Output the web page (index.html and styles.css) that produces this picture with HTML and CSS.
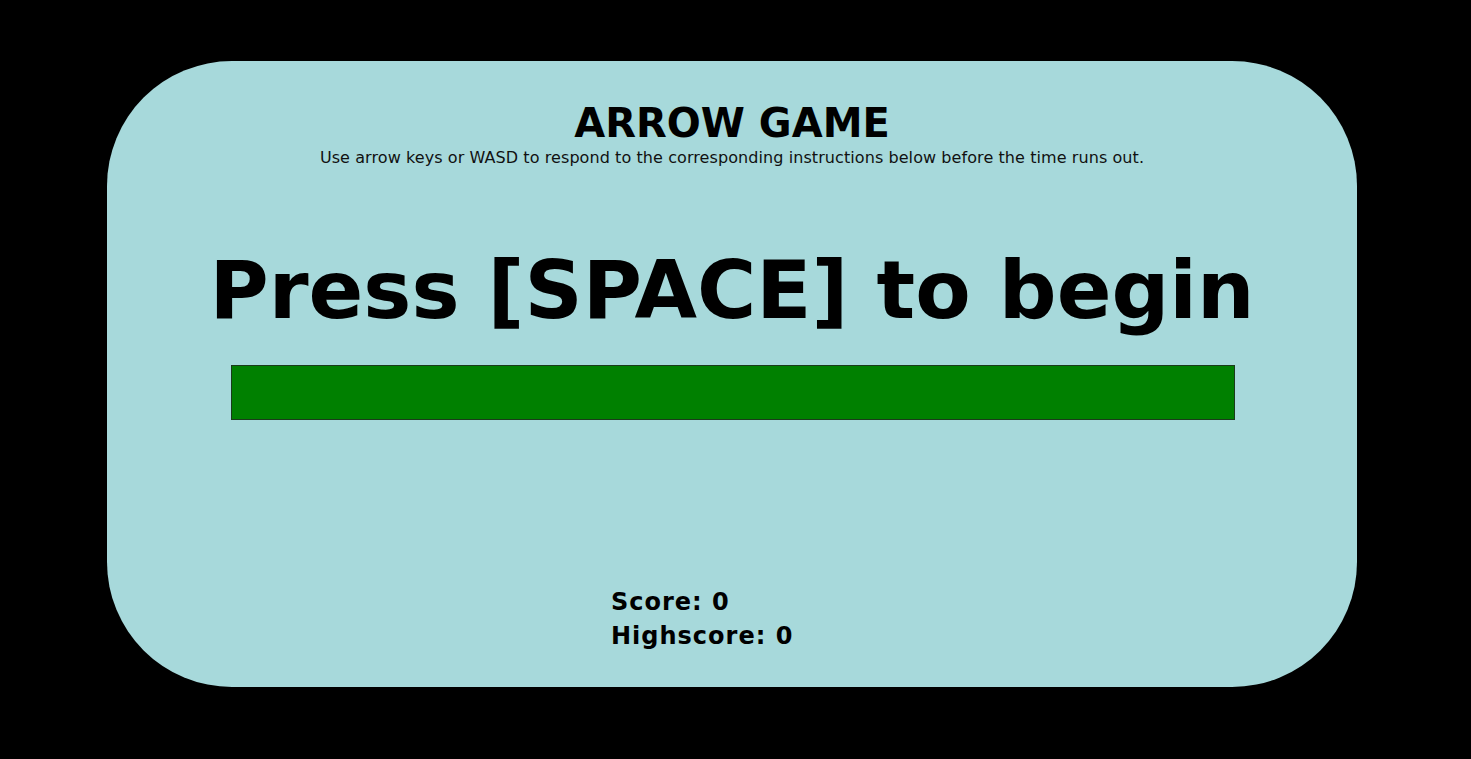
FILE: index.html
```html
<!DOCTYPE html>
<html>
<head>
<meta charset="utf-8">
<title>Arrow Game</title>
<link rel="stylesheet" href="styles.css">
</head>
<body>
  <main class="card">
    <h1 class="title">ARROW GAME</h1>
    <p class="subtitle">Use arrow keys or WASD to respond to the corresponding instructions below before the time runs out.</p>
    <div class="prompt">Press [SPACE] to begin</div>
    <div class="timer"></div>
    <div class="scores">
      <div class="score">Score: 0</div>
      <div class="score">Highscore: 0</div>
    </div>
  </main>
</body>
</html>
```

FILE: styles.css
```css
html, body {
  margin: 0;
  padding: 0;
  background: #000;
  height: 100%;
}

body {
  font-family: "DejaVu Sans", Verdana, sans-serif;
  color: #000;
}

.card {
  box-sizing: border-box;
  margin: 61px 0 0 107px;
  width: 1250px;
  height: 626px;
  border-radius: 125px;
  background: #a7d9db;
  display: flex;
  flex-direction: column;
  align-items: center;
  padding-top: 39px;
}

.card > * {
  flex-shrink: 0;
}

.card .title {
  margin: 0;
  font-size: 40px;
  font-weight: bold;
  line-height: 46px;
}

.card .subtitle {
  margin: 2px 0 0;
  font-size: 16px;
  line-height: 20px;
  letter-spacing: 0.08px;
  color: #111;
}

.prompt {
  margin-top: 75px;
  font-size: 80.8px;
  font-weight: bold;
  line-height: 94px;
}

.timer {
  margin: 28px 0 0 2px;
  box-sizing: border-box;
  width: 1004px;
  height: 55px;
  background: #008000;
  border: 1px solid #1b3b1b;
}

.scores {
  margin-top: 165px;
  align-self: flex-start;
  margin-left: 504px;
}

.score {
  font-size: 24px;
  font-weight: bold;
  line-height: 34px;
  letter-spacing: 1px;
}
```
